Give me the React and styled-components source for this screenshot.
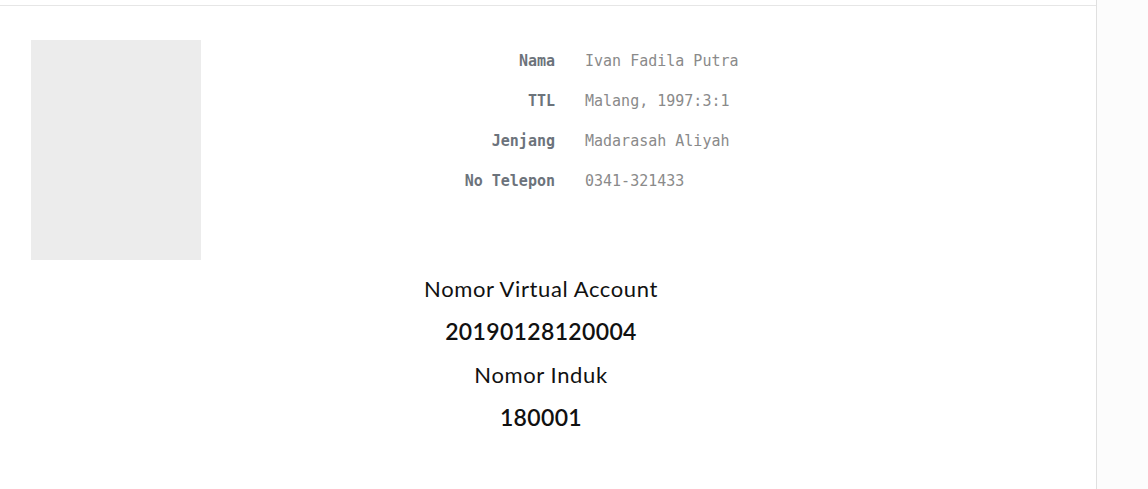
import React from 'react'
import styled, { createGlobalStyle } from 'styled-components'

const GlobalStyle = createGlobalStyle`
  html, body {
    margin: 0;
    padding: 0;
    background: #fcfcfc;
  }
`

const profile = [
  { label: 'Nama', value: 'Ivan Fadila Putra' },
  { label: 'TTL', value: 'Malang, 1997:3:1' },
  { label: 'Jenjang', value: 'Madarasah Aliyah' },
  { label: 'No Telepon', value: '0341-321433' },
]

export default function App() {
  return (
    <>
      <GlobalStyle />
      <Page>
        <Main>
          <TopBar />
          <Content>
            <Profile>
              <Photo />
              <Details>
                {profile.map((p) => (
                  <React.Fragment key={p.label}>
                    <Label>{p.label}</Label>
                    <Value>{p.value}</Value>
                  </React.Fragment>
                ))}
              </Details>
            </Profile>
            <Numbers>
              <Caption>Nomor Virtual Account</Caption>
              <Number>20190128120004</Number>
              <Caption>Nomor Induk</Caption>
              <Number>180001</Number>
            </Numbers>
          </Content>
        </Main>
        <Side />
      </Page>
    </>
  )
}

const Page = styled.div`
  display: flex;
  min-height: 489px;
`
const Main = styled.div`
  width: 1096px;
  background: #fff;
  border-right: 1px solid #e0e0e0;
`
const TopBar = styled.div`
  height: 5px;
  border-bottom: 1px solid #e6e6e6;
`
const Content = styled.div`
  padding: 34px 45px 40px 31px;
`
const Profile = styled.div`
  display: flex;
  align-items: flex-start;
`
const Photo = styled.div`
  width: 170px;
  height: 220px;
  background: #ececec;
  flex-shrink: 0;
`
const Details = styled.div`
  display: grid;
  grid-template-columns: 120px auto;
  column-gap: 30px;
  margin-left: 234px;
  padding-top: 1px;
  font-family: "DejaVu Sans Mono", "Liberation Mono", monospace;
  font-size: 15px;
  line-height: 40px;
`
const Label = styled.div`
  text-align: right;
  font-weight: bold;
  color: #6c737b;
`
const Value = styled.div`
  color: #8a8a8a;
`
const Numbers = styled.div`
  margin-top: 7px;
  text-align: center;
  font-family: Lato, "Open Sans", sans-serif;
  color: #111;
  line-height: 43px;
`
const Caption = styled.div`
  font-size: 22px;
  letter-spacing: 0.6px;
`
const Number = styled.div`
  font-size: 23px;
  font-weight: 600;
  letter-spacing: 0.35px;
`
const Side = styled.div`
  flex: 1;
  background: #fcfcfc;
`
